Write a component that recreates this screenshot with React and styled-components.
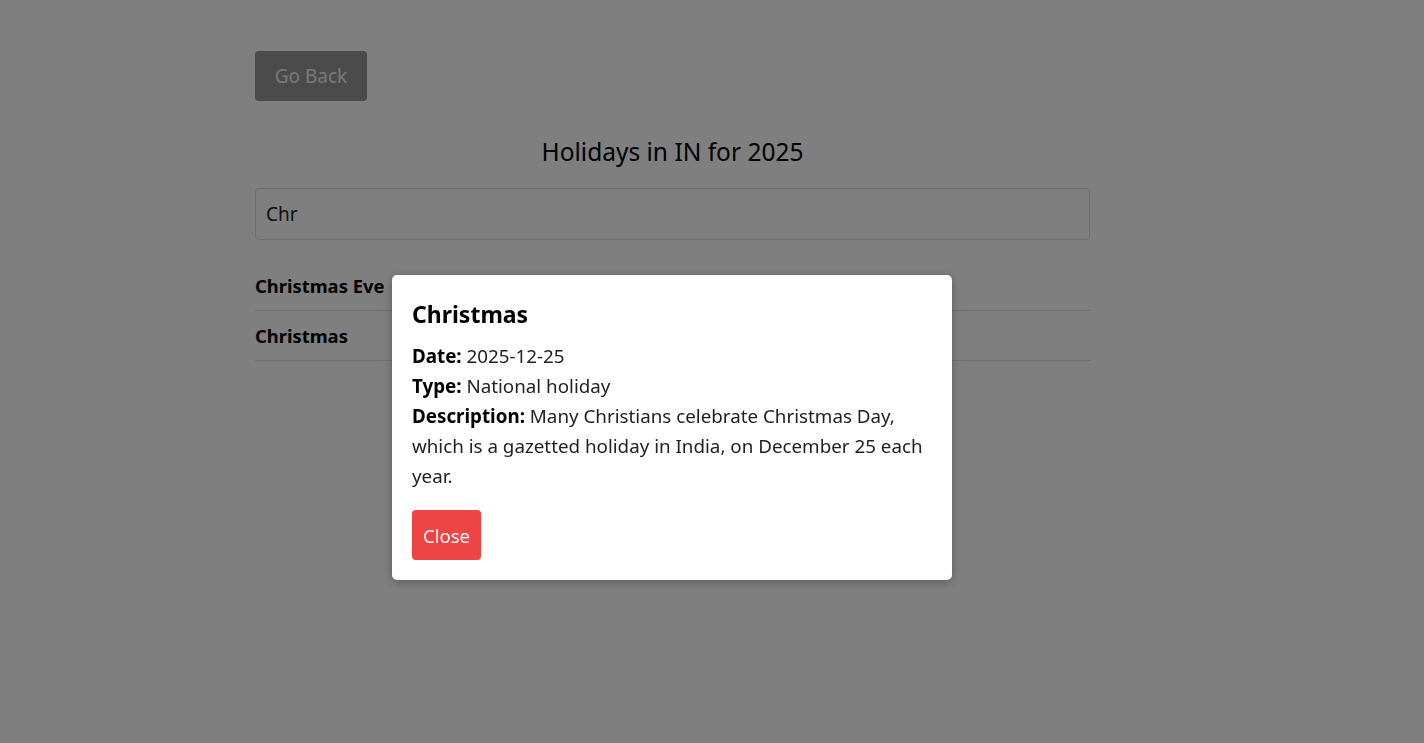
import React from "react";
import styled, { createGlobalStyle } from "styled-components";

const Global = createGlobalStyle`
  html, body { margin: 0; padding: 0; background: #ffffff; }
  body { font-family: "Segoe UI", "Noto Sans", "Open Sans", sans-serif; color: #000; }
  * { box-sizing: border-box; }
`;

const Page = styled.div`
  width: 835px;
  margin: 0 0 0 255px;
  padding-top: 51px;
  min-height: 743px;
`;

const BackButton = styled.button`
  height: 50px;
  width: 112px;
  padding: 0;
  border: none;
  border-radius: 4px;
  background: #969696;
  color: #f2f2f2;
  font-family: inherit;
  font-size: 19px;
  cursor: pointer;
`;

const Title = styled.h2`
  margin: 35px 0 20px;
  font-size: 24.5px;
  line-height: 32px;
  font-weight: 400;
  text-align: center;
`;

const Search = styled.input`
  display: block;
  width: 100%;
  height: 52px;
  padding: 0 10px;
  border: 1px solid #dcdcdc;
  border-radius: 4px;
  font-family: inherit;
  font-size: 19px;
  color: #222;
  outline: none;
`;

const List = styled.ul`
  list-style: none;
  margin: 21px 0 0;
  padding: 0;
`;

const Item = styled.li`
  height: 50px;
  display: flex;
  align-items: center;
  border-bottom: 1px solid #dedede;
  font-size: 18.4px;
  font-weight: 700;
  padding-bottom: 1px;
`;

const Overlay = styled.div`
  position: fixed;
  inset: 0;
  background: rgba(0, 0, 0, 0.5);
`;

const Modal = styled.div`
  position: absolute;
  left: 392px;
  top: 275px;
  width: 560px;
  padding: 20px;
  background: #fff;
  border-radius: 5px;
  box-shadow: 0 2px 10px rgba(0, 0, 0, 0.3);
`;

const ModalTitle = styled.h3`
  margin: 0 0 8px;
  font-size: 23px;
  line-height: 38px;
  font-weight: 700;
`;

const Line = styled.p`
  margin: 0;
  font-size: 18.8px;
  line-height: 30px;
  color: #222;
  strong { color: #000; }
`;

const CloseButton = styled.button`
  margin-top: 19px;
  height: 50px;
  padding: 0 11px;
  border: none;
  border-radius: 4px;
  background: #ef4444;
  color: #fff;
  font-family: inherit;
  font-size: 18.5px;
  cursor: pointer;
`;

export default function App() {
  return (
    <>
      <Global />
      <Page>
        <BackButton>Go Back</BackButton>
        <Title>Holidays in IN for 2025</Title>
        <Search defaultValue="Chr" />
        <List>
          <Item>Christmas Eve</Item>
          <Item>Christmas</Item>
        </List>
      </Page>
      <Overlay>
        <Modal>
          <ModalTitle>Christmas</ModalTitle>
          <Line><strong>Date:</strong> 2025-12-25</Line>
          <Line><strong>Type:</strong> National holiday</Line>
          <Line>
            <strong>Description:</strong> Many Christians celebrate Christmas Day,
            which is a gazetted holiday in India, on December 25 each year.
          </Line>
          <CloseButton>Close</CloseButton>
        </Modal>
      </Overlay>
    </>
  );
}
